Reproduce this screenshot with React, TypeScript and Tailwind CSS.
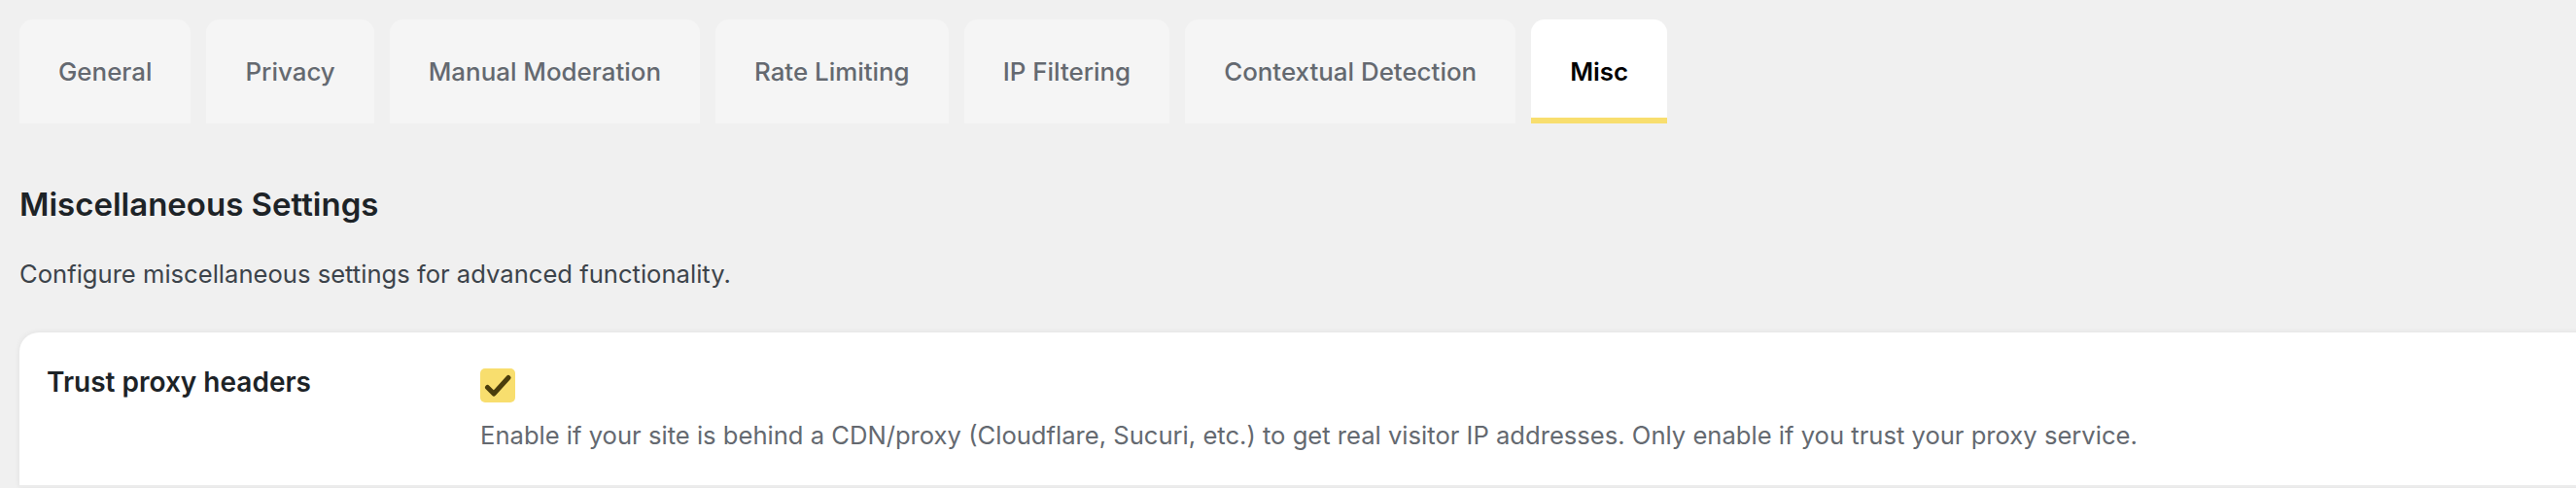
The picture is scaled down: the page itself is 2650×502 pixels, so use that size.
import { useState } from "react";

const tabs = [
  "General",
  "Privacy",
  "Manual Moderation",
  "Rate Limiting",
  "IP Filtering",
  "Contextual Detection",
  "Misc",
];

function CheckBox({
  checked,
  onChange,
}: {
  checked: boolean;
  onChange: (value: boolean) => void;
}) {
  return (
    <button
      type="button"
      onClick={() => onChange(!checked)}
      className={`mt-1 flex h-[35px] w-[36px] items-center justify-center rounded-[5px] ${
        checked ? "bg-[#f8de6e]" : "bg-white border-2 border-[#8c8f94]"
      }`}
    >
      {checked && (
        <svg width="36" height="35" viewBox="0 0 36 35">
          <path
            d="M7.5 19.5 L14 26 L29 9.5"
            fill="none"
            stroke="#4a3d0c"
            strokeWidth="5"
            strokeLinecap="round"
            strokeLinejoin="round"
          />
        </svg>
      )}
    </button>
  );
}

export default function App() {
  const [active, setActive] = useState("Misc");
  const [trustProxy, setTrustProxy] = useState(true);

  return (
    <div
      className="w-[2650px] min-h-[502px] overflow-hidden bg-[#f0f0f0] pt-5 pl-5"
      style={{ fontFamily: "Inter, 'Liberation Sans', sans-serif" }}
    >
      {/* settings tabs */}
      <div className="flex gap-4">
        {tabs.map((tab) => (
          <button
            key={tab}
            type="button"
            onClick={() => setActive(tab)}
            className={`h-[107px] rounded-t-[14px] px-10 text-[25.9px] leading-[36px] ${
              active === tab
                ? "bg-white border-b-[6px] border-[#f8de6e] pt-[6px] font-semibold text-black"
                : "bg-[#f5f5f5] font-medium text-[#646970]"
            }`}
          >
            {tab}
          </button>
        ))}
      </div>

      <h2 className="mt-[63px] text-[33px] leading-[40px] font-semibold text-[#1d2327]">
        Miscellaneous Settings
      </h2>
      <p className="mt-[34px] text-[25.6px] leading-[36px] text-[#3c434a]">
        Configure miscellaneous settings for advanced functionality.
      </p>

      <div className="mt-[42px] w-[2660px] rounded-t-[20px] bg-white shadow-[0_0_6px_rgba(0,0,0,0.07)]">
        <div className="flex border-b-2 border-[#ececec] pl-7 pt-[33px] pb-[33px]">
          <div className="w-[446px] shrink-0 text-[28px] leading-[36px] font-semibold text-[#1d2327]">
            Trust proxy headers
          </div>
          <div className="flex flex-col">
            <CheckBox checked={trustProxy} onChange={setTrustProxy} />
            <p className="mt-[16px] text-[25.6px] leading-[36px] text-[#646970]">
              Enable if your site is behind a CDN/proxy (Cloudflare, Sucuri,
              etc.) to get real visitor IP addresses. Only enable if you trust
              your proxy service.
            </p>
          </div>
        </div>
      </div>
    </div>
  );
}
